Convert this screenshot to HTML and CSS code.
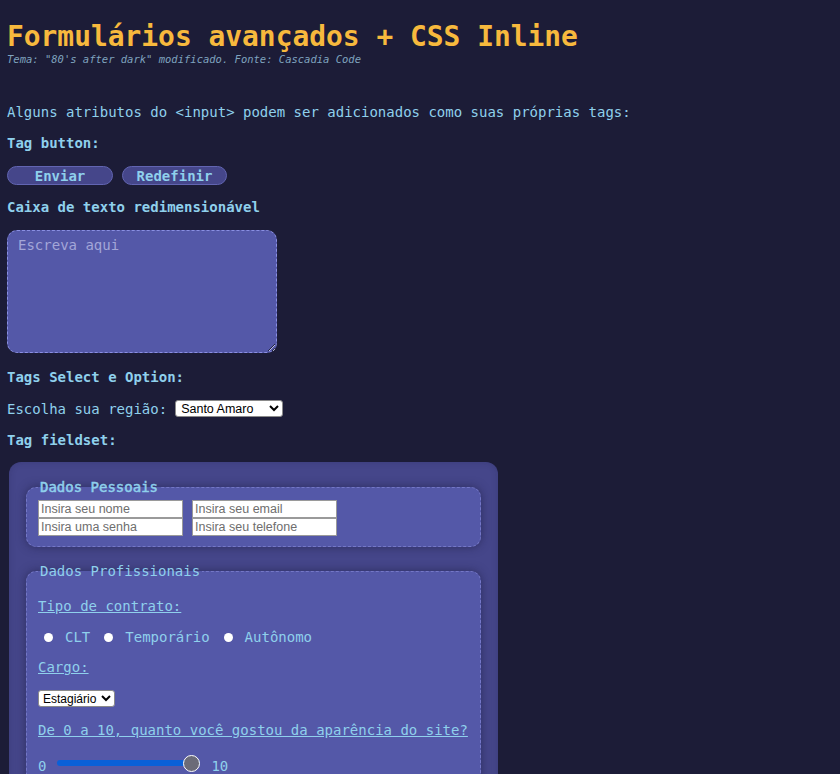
FILE: index.html
```html
<!DOCTYPE html>
<html lang="pt-BR">
<head>
<meta charset="utf-8">
<title>Formulários avançados + CSS Inline</title>
<link rel="stylesheet" href="styles.css">
</head>
<body>
<h1 class="title">Formulários avançados + CSS Inline</h1>
<p class="subtitle">Tema: "80's after dark" modificado. Fonte: Cascadia Code</p>

<p class="intro">Alguns atributos do &lt;input&gt; podem ser adicionados como suas próprias tags:</p>

<p class="heading">Tag button:</p>
<div class="buttons">
  <button class="btn btn-send" type="submit">Enviar</button>
  <button class="btn btn-reset" type="reset">Redefinir</button>
</div>

<p class="heading">Caixa de texto redimensionável</p>
<textarea class="textbox" placeholder="Escreva aqui"></textarea>

<p class="heading heading-select">Tags Select e Option:</p>
<p class="line">Escolha sua região:<select class="sel sel-region"><option>Santo Amaro</option></select></p>

<p class="heading heading-fieldset">Tag fieldset:</p>

<div class="outer">
  <fieldset class="group group-personal">
    <legend class="legend legend-bold">Dados Pessoais</legend>
    <div class="inputs">
      <input class="field" type="text" placeholder="Insira seu nome">
      <input class="field" type="email" placeholder="Insira seu email">
      <input class="field" type="password" placeholder="Insira uma senha">
      <input class="field" type="tel" placeholder="Insira seu telefone">
    </div>
  </fieldset>

  <fieldset class="group group-pro">
    <legend class="legend">Dados Profissionais</legend>
    <p class="under">Tipo de contrato:</p>
    <p class="radios">
      <input class="radio" type="radio" name="c"><span class="rlabel">CLT</span>
      <input class="radio" type="radio" name="c"><span class="rlabel">Temporário</span>
      <input class="radio" type="radio" name="c"><span class="rlabel">Autônomo</span>
    </p>
    <p class="under">Cargo:</p>
    <p class="selrow"><select class="sel sel-cargo"><option>Estagiário</option></select></p>
    <p class="under">De 0 a 10, quanto você gostou da aparência do site?</p>
    <p class="rangerow"><span>0</span><input class="range" type="range" min="0" max="10" value="10"><span>10</span></p>
  </fieldset>
</div>
</body>
</html>
```

FILE: styles.css
```css
html, body {
  background: #1c1c37;
}
body {
  margin: 8px 8px 8px 7px;
  font-family: "DejaVu Sans Mono", monospace;
  font-size: 14px;
  line-height: 17px;
  color: #8fd0ec;
}
.title {
  font-size: 27.9px;
  color: #f7b93d;
  margin: 12px 0 0;
  line-height: 34px;
}
.subtitle {
  margin: -1px 0 0;
  font-size: 10.5px;
  line-height: 13px;
  font-style: italic;
  color: #7fa3bf;
}
p {
  margin: 14px 0;
}
.intro {
  margin: 38px 0 14px;
}
.heading {
  font-weight: bold;
}
.heading-select {
  margin-top: 16px;
}
.heading-fieldset {
  margin-bottom: 13px;
}
.buttons {
  display: flex;
  gap: 9px;
}
.btn {
  font-family: "DejaVu Sans Mono", monospace;
  font-size: 14px;
  font-weight: bold;
  color: #8fd0ec;
  background: #45468a;
  border: 1px solid #6265b2;
  border-radius: 10px;
  height: 19px;
  padding: 0;
  line-height: 16px;
}
.btn-send { width: 106px; }
.btn-reset { width: 105px; }
.textbox {
  display: block;
  box-sizing: border-box;
  width: 270px;
  height: 123px;
  margin: 0;
  background: #5458a8;
  border: 1px dashed #8a8fe2;
  border-radius: 10px;
  padding: 6px 10px;
  font-family: "DejaVu Sans Mono", monospace;
  font-size: 14px;
  color: #c0c4ee;
  outline: none;
}
.textbox::placeholder {
  color: #a3a6d8;
}
.sel {
  font-family: "Liberation Sans", Arial, sans-serif;
  font-size: 12.5px;
  height: 17px;
  padding: 0 0 0 1px;
  border: 1px solid #8a8a8a;
  border-radius: 3px;
  background: #fff;
  color: #000;
  vertical-align: 1px;
}
.sel-region { width: 108px; margin-left: 8px; }
.sel-cargo { width: 77px; font-size: 12px; padding: 0; }
.outer {
  margin: 0 0 0 2px;
  width: 489px;
  box-sizing: border-box;
  background: #45468a;
  border-radius: 12px;
  padding: 17px 17px 20px;
  box-shadow: inset 0 0 6px rgba(30, 30, 70, 0.25);
}
.group {
  margin: 0;
  background: #5458a8;
  border: 1px dashed #7477c6;
  border-radius: 10px;
  padding: 4px 11px 11px;
  box-shadow: 0 0 10px rgba(25, 25, 60, 0.55);
  min-width: 0;
}
.group-personal {
  padding-bottom: 10px;
}
.group-pro {
  margin-top: 16px;
}
.legend {
  padding: 0 2px;
  color: #8fd0ec;
}
.legend-bold {
  -webkit-text-stroke: 0.5px #8fd0ec;
}
.inputs {
  display: grid;
  grid-template-columns: 145px 145px;
  column-gap: 9px;
  row-gap: 0;
}
.field {
  box-sizing: border-box;
  width: 145px;
  height: 18px;
  margin: 0;
  padding: 0 2px;
  border: 1px solid #9a9a9a;
  font-family: "Liberation Sans", Arial, sans-serif;
  font-size: 12.5px;
  background: #fff;
  outline: none;
}
.field::placeholder {
  color: #6e6e6e;
}
.under {
  text-decoration: underline;
}
.radios {
  display: flex;
  align-items: center;
  height: 16px;
}
.radio {
  appearance: none;
  -webkit-appearance: none;
  width: 9px;
  height: 9px;
  border-radius: 50%;
  background: #fff;
  border: none;
  margin: 0 12px 0 6px;
}
.rlabel {
  margin-right: 8px;
}
.rangerow {
  margin: 14px 0 0;
}
.range {
  appearance: none;
  -webkit-appearance: none;
  width: 143px;
  height: 16px;
  margin: 2px 11px 4px 11px;
  background: transparent;
  vertical-align: baseline;
}
.range::-webkit-slider-runnable-track {
  height: 6px;
  border-radius: 3px;
  background: #0a60d8;
}
.range::-webkit-slider-thumb {
  -webkit-appearance: none;
  width: 17px;
  height: 17px;
  border-radius: 50%;
  background: #6b6b78;
  border: 1px solid #ffffff;
  box-sizing: border-box;
  margin-top: -5.5px;
}
```
